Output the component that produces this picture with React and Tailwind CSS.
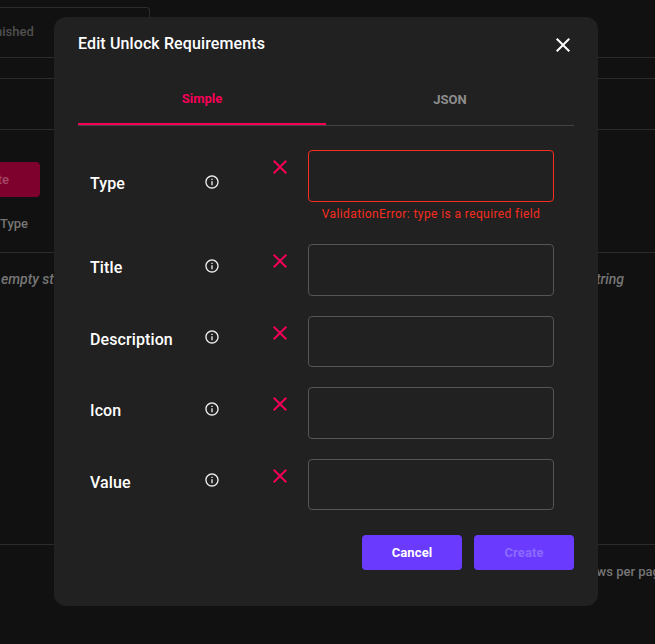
const closePath =
  "M19 6.41 17.59 5 12 10.59 6.41 5 5 6.41 10.59 12 5 17.59 6.41 19 12 13.41 17.59 19 19 17.59 13.41 12z";

const fields = [
  { label: "Type", error: "ValidationError: type is a required field" },
  { label: "Title" },
  { label: "Description" },
  { label: "Icon" },
  { label: "Value" },
];

function CloseIcon({ className }) {
  return (
    <svg width="24" height="24" viewBox="0 0 24 24" fill="currentColor" className={className}>
      <path d={closePath} />
    </svg>
  );
}

function InfoIcon() {
  return (
    <svg width="16" height="16" viewBox="0 0 24 24" fill="currentColor" className="text-[#eeeeee]">
      <path d="M11 7h2v2h-2zm0 4h2v6h-2zm1-9C6.48 2 2 6.48 2 12s4.48 10 10 10 10-4.48 10-10S17.52 2 12 2zm0 18c-4.41 0-8-3.59-8-8s3.59-8 8-8 8 3.59 8 8-3.59 8-8 8z" />
    </svg>
  );
}

function Field({ label, error }) {
  return (
    <div className={`flex items-center pl-3 ${error ? "mb-[22.4px]" : "mb-5"}`}>
      <div className="w-[108px] text-base font-medium tracking-[0.1px] text-white -mt-[4px]">{label}</div>
      <div className="w-[28px] flex justify-center -mt-[9px]">
        <InfoIcon />
      </div>
      <div className="flex items-start self-start ml-[42px]">
        <button type="button" className="w-6 h-6 mt-[5px] flex items-center justify-center text-[#f50057]">
          <CloseIcon />
        </button>
        <div className="ml-4 w-[246px]">
          <input
            className={`block w-full h-[51.5px] rounded bg-transparent border outline-none ${
              error ? "border-[#f62d20]" : "border-[#555555]"
            }`}
          />
          {error ? (
            <p className="mt-[5px] mb-[1.5px] text-center text-xs leading-[14px] tracking-[0.4px] text-[#f62d20]">
              {error}
            </p>
          ) : null}
        </div>
      </div>
    </div>
  );
}

function Background() {
  return (
    <div className="min-h-screen bg-[#111111] text-[#757575] text-[13px] font-medium overflow-hidden">
      <div className="h-[58px] pt-[7px] border-b border-[#2c2c2c]">
        <div className="w-[150px] h-[51px] border-r border-t border-[#2c2c2c] rounded-tr flex items-center">
          <span className="text-[#4f4f4f] -ml-[5px] -mt-[2px]">nished</span>
        </div>
      </div>
      <div className="h-[21px] border-b border-[#2c2c2c]"></div>
      <div className="h-[51px] border-b border-[#2c2c2c]"></div>
      <div className="h-[123px] border-b border-[#2c2c2c] pt-[32px]">
        <div className="w-[40px] h-[35px] bg-[#7e002c] rounded-r flex items-center justify-end pr-[31px] text-[#a3486a]">
          te
        </div>
        <div className="mt-[17px]">Type</div>
      </div>
      <div className="h-[292px] border-b border-[#2c2c2c] flex justify-between pt-[16px] text-sm italic">
        <span className="pl-[1px]">empty string</span>
        <span className="pr-[31px]">string</span>
      </div>
      <div className="pt-[17px] ml-[581px] whitespace-nowrap">Rows per page:</div>
    </div>
  );
}

export default function App() {
  return (
    <div className="font-['Roboto',sans-serif]">
      <Background />
      <div className="fixed left-[54px] top-[17px] w-[544px] h-[589px] rounded-xl bg-[#212121] px-6 pt-4">
        <div className="flex items-center justify-between h-[22px]">
          <h2 className="text-base font-medium tracking-[0.12px] text-white">Edit Unlock Requirements</h2>
          <CloseIcon className="text-white mr-[-1px] mt-[1px]" />
        </div>
        <div className="flex mt-5 h-[51px] border-b border-[#444444] text-[13px] font-bold">
          <div className="w-1/2 h-full flex items-center justify-center border-b-2 border-[#f50057] text-[#f50057]">
            Simple
          </div>
          <div className="w-1/2 flex items-center justify-center text-[#8d8d8d]">JSON</div>
        </div>
        <div className="mt-6">
          {fields.map((f) => (
            <Field key={f.label} label={f.label} error={f.error} />
          ))}
        </div>
        <div className="flex justify-end gap-3 mt-[24.5px]">
          <button type="button" className="w-[100px] h-[35px] rounded bg-[#6a3bff] text-[13px] font-bold tracking-[0.1px] text-white">
            Cancel
          </button>
          <button type="button" className="w-[100px] h-[35px] rounded bg-[#6a3bff] text-[13px] font-bold tracking-[0.1px] text-[#8c6aff]">
            Create
          </button>
        </div>
      </div>
    </div>
  );
}
